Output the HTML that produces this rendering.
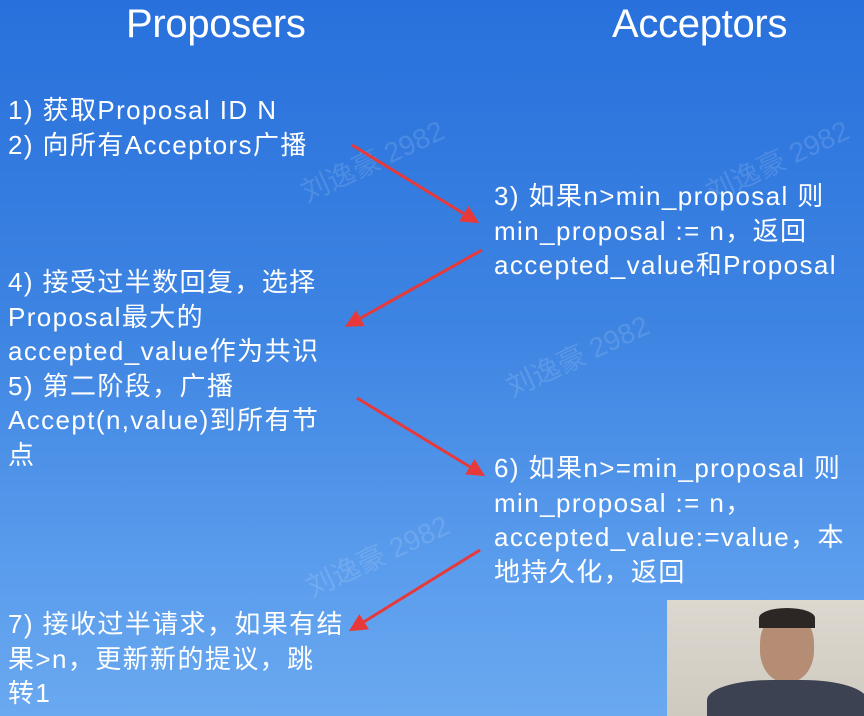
<!DOCTYPE html>
<html><head><meta charset="utf-8"><style>
html,body{margin:0;padding:0;width:864px;height:716px;overflow:hidden}
body{position:relative;background:linear-gradient(180deg,#2870dc 0%,#3d84e2 45%,#5b9ded 80%,#6aa9f0 100%);font-family:"Liberation Sans","Noto Sans CJK SC",sans-serif;color:#fff}
.t{position:absolute;font-size:40px;top:2px;line-height:44px;letter-spacing:-0.3px}
.b{position:absolute;font-size:26px;line-height:34.5px;letter-spacing:1.4px;white-space:nowrap}
.wm{position:absolute;color:rgba(255,255,255,0.13);font-size:28px;transform:rotate(-25deg);white-space:nowrap}
</style></head><body>
<div class="wm" style="left:295px;top:140px">刘逸豪 2982</div>
<div class="wm" style="left:700px;top:140px">刘逸豪 2982</div>
<div class="wm" style="left:500px;top:335px">刘逸豪 2982</div>
<div class="wm" style="left:300px;top:535px">刘逸豪 2982</div>
<div class="t" style="left:126px">Proposers</div>
<div class="t" style="left:612px">Acceptors</div>
<div class="b" style="left:8px;top:93px">1) 获取Proposal ID N<br>2) 向所有Acceptors广播</div>
<div class="b" style="left:494px;top:179px">3) 如果n&gt;min_proposal 则<br>min_proposal := n，返回<br>accepted_value和Proposal</div>
<div class="b" style="left:8px;top:265px">4) 接受过半数回复，选择<br>Proposal最大的<br>accepted_value作为共识<br>5) 第二阶段，广播<br>Accept(n,value)到所有节<br>点</div>
<div class="b" style="left:494px;top:451px">6) 如果n&gt;=min_proposal 则<br>min_proposal := n，<br>accepted_value:=value，本<br>地持久化，返回</div>
<div class="b" style="left:8px;top:607px">7) 接收过半请求，如果有结<br>果&gt;n，更新新的提议，跳<br>转1</div>
<svg style="position:absolute;left:0;top:0" width="864" height="716">
<defs><marker id="a" markerWidth="6" markerHeight="6" refX="4" refY="3" orient="auto"><path d="M0,0 L6,3 L0,6z" fill="#e8393a"/></marker></defs>
<g stroke="#e8393a" stroke-width="3" marker-end="url(#a)">
<line x1="352" y1="145" x2="474" y2="220"/>
<line x1="482" y1="250" x2="350" y2="324"/>
<line x1="357" y1="398" x2="480" y2="473"/>
<line x1="480" y1="550" x2="354" y2="628"/>
</g></svg>
<div style="position:absolute;left:667px;top:600px;width:197px;height:116px;overflow:hidden;background:linear-gradient(180deg,#dcd8cf,#cfcac0)">
<div style="position:absolute;left:93px;top:12px;width:54px;height:70px;border-radius:45%;background:#b58c74"></div>
<div style="position:absolute;left:92px;top:8px;width:56px;height:20px;border-radius:50% 50% 0 0;background:#2c2624"></div>
<div style="position:absolute;left:40px;top:80px;width:160px;height:50px;border-radius:40% 40% 0 0;background:#3d4252"></div>
</div>
</body></html>
